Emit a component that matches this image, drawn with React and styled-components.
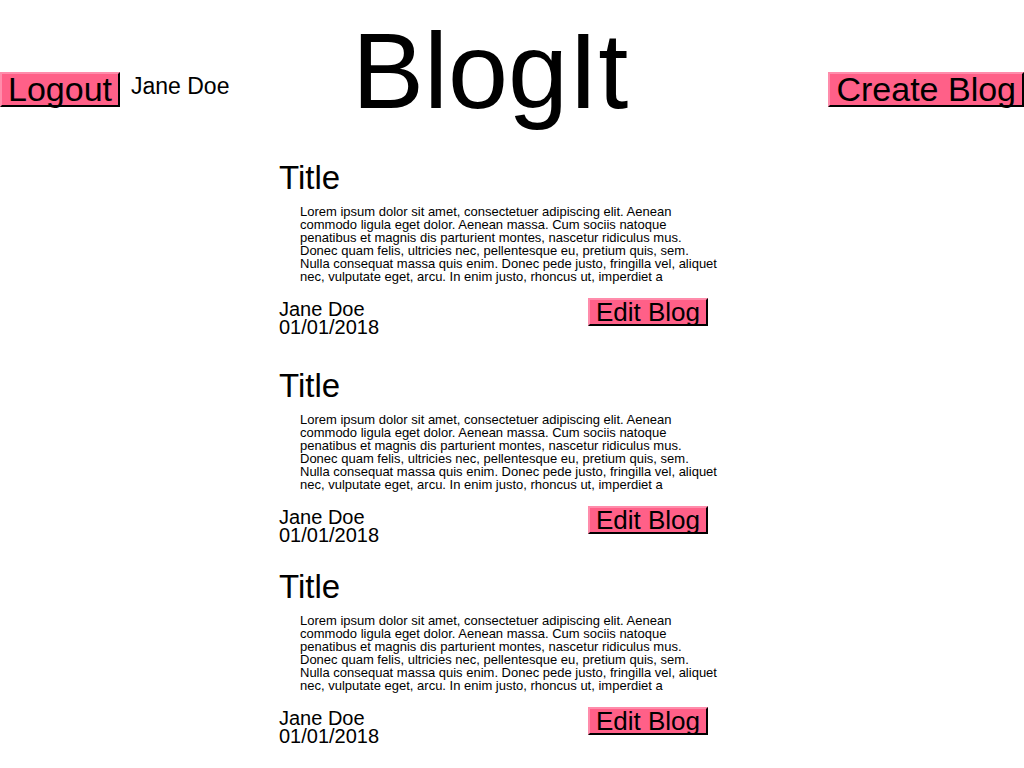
import React from 'react';
import styled, { createGlobalStyle } from 'styled-components';

const FONT = `"Liberation Sans", Arial, sans-serif`;

const GlobalStyle = createGlobalStyle`
  body {
    margin: 0;
    background: #ffffff;
    color: #000000;
    font-family: ${FONT};
  }
`;

const LOREM =
  'Lorem ipsum dolor sit amet, consectetuer adipiscing elit. Aenean commodo ligula eget dolor. Aenean massa. Cum sociis natoque penatibus et magnis dis parturient montes, nascetur ridiculus mus. Donec quam felis, ultricies nec, pellentesque eu, pretium quis, sem. Nulla consequat massa quis enim. Donec pede justo, fringilla vel, aliquet nec, vulputate eget, arcu. In enim justo, rhoncus ut, imperdiet a';

const posts = [
  { id: 1, title: 'Title', body: LOREM, author: 'Jane Doe', date: '01/01/2018' },
  { id: 2, title: 'Title', body: LOREM, author: 'Jane Doe', date: '01/01/2018' },
  { id: 3, title: 'Title', body: LOREM, author: 'Jane Doe', date: '01/01/2018' },
];

const App = () => {
  return (
    <>
      <GlobalStyle />
      <Header>
        <UserGroup>
          <PinkButton size="34px" lh="29px">Logout</PinkButton>
          <UserName>Jane Doe</UserName>
        </UserGroup>
        <Logo>BlogIt</Logo>
        <CreateWrap>
          <PinkButton size="34px" lh="29px">Create Blog</PinkButton>
        </CreateWrap>
      </Header>
      <Feed>
        {posts.map((post) => (
          <Post key={post.id}>
            <PostTitle>{post.title}</PostTitle>
            <PostBody>{post.body}</PostBody>
            <PostFooter>
              <Meta>
                <div>{post.author}</div>
                <div>{post.date}</div>
              </Meta>
              <PinkButton size="26px" lh="22px">Edit Blog</PinkButton>
            </PostFooter>
          </Post>
        ))}
      </Feed>
    </>
  );
};

const Header = styled.header`
  display: flex;
  align-items: flex-start;
`;

const UserGroup = styled.div`
  flex: 0 0 352px;
  display: flex;
  align-items: flex-start;
  gap: 11px;
  margin-top: 72px;
`;

const UserName = styled.span`
  font-size: 23px;
  margin-top: 1px;
`;

const Logo = styled.h1`
  margin: 0;
  font-size: 108px;
  font-weight: normal;
  line-height: 141px;
`;

const CreateWrap = styled.div`
  margin-left: auto;
  margin-top: 72px;
`;

const PinkButton = styled.button`
  font-family: ${FONT};
  font-size: ${(p) => p.size};
  line-height: ${(p) => p.lh};
  padding: 1px 6px;
  color: #000000;
  background: #ff6088;
  border: 2px solid;
  border-color: #ff8cab #000000 #000000 #ff8cab;
  cursor: pointer;
`;

const Feed = styled.main`
  width: 466px;
  margin: 0 auto;
`;

const Post = styled.article`
  margin-top: 23px;
  &:first-child {
    margin-top: 17px;
    margin-bottom: 30px;
  }
  &:first-child + & {
    margin-top: 0;
  }
`;

const PostTitle = styled.h2`
  margin: 0;
  font-size: 33px;
  font-weight: normal;
  line-height: 40px;
`;

const PostBody = styled.p`
  width: 419px;
  margin: 7px 0 0 21px;
  font-size: 13px;
  line-height: 13px;
`;

const PostFooter = styled.div`
  display: flex;
  justify-content: space-between;
  align-items: flex-start;
  margin-top: 15px;
  padding-right: 37px;
`;

const Meta = styled.div`
  margin-top: 2px;
  font-size: 20px;
  line-height: 18px;
`;

export default App;
